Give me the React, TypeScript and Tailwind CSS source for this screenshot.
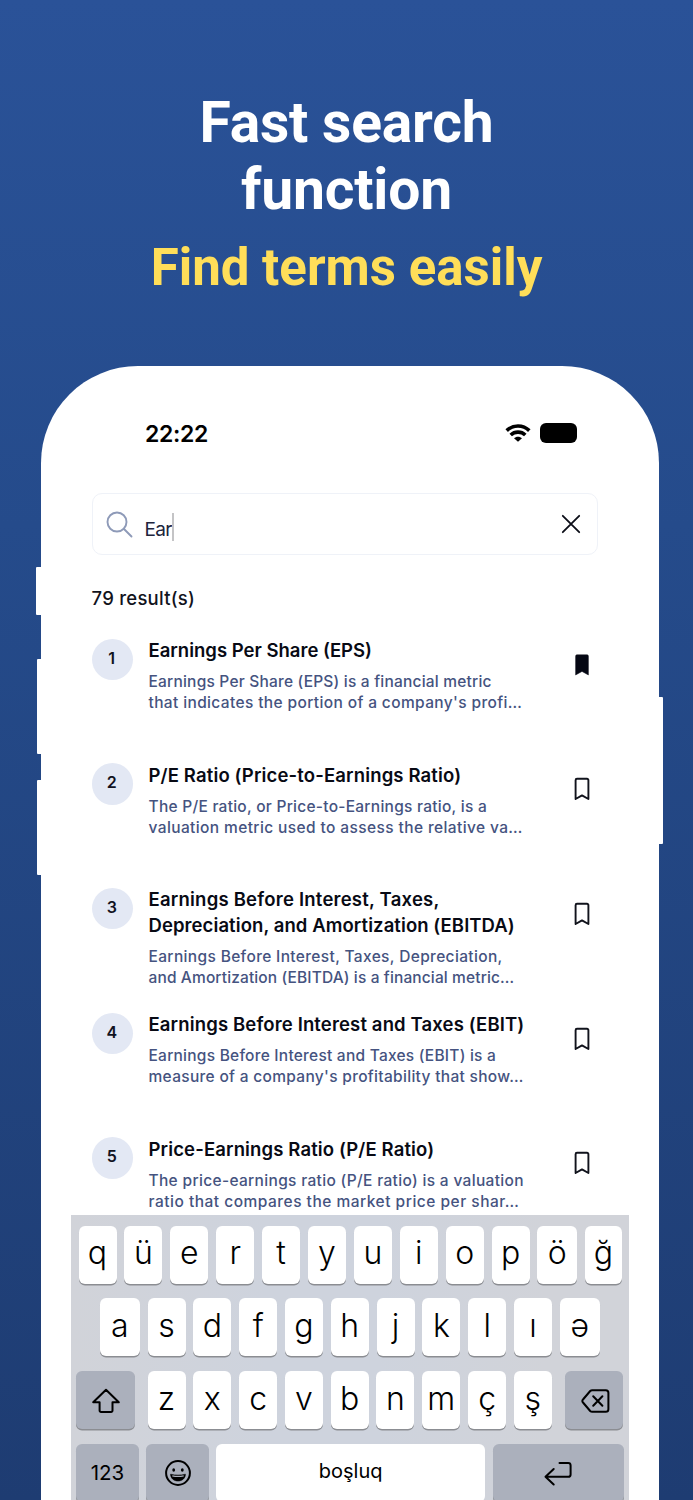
import type { ReactNode } from "react";

interface Line {
  text: string;
  className: string;
}

interface Term {
  title: Line[];
  lines: Line[];
  saved?: boolean;
}

const terms: Term[] = [
  {
    title: [{ text: "Earnings Per Share (EPS)", className: "tracking-[0px]" }],
    lines: [
      { text: "Earnings Per Share (EPS) is a financial metric", className: "tracking-[0.21px]" },
      { text: "that indicates the portion of a company's profi…", className: "tracking-[0.37px]" },
    ],
    saved: true,
  },
  {
    title: [{ text: "P/E Ratio (Price-to-Earnings Ratio)", className: "tracking-[0.14px]" }],
    lines: [
      { text: "The P/E ratio, or Price-to-Earnings ratio, is a", className: "tracking-[0.26px]" },
      { text: "valuation metric used to assess the relative va…", className: "tracking-[0.39px]" },
    ],
  },
  {
    title: [
      { text: "Earnings Before Interest, Taxes,", className: "tracking-[0.22px]" },
      { text: "Depreciation, and Amortization (EBITDA)", className: "tracking-[0.08px]" },
    ],
    lines: [
      { text: "Earnings Before Interest, Taxes, Depreciation,", className: "tracking-[0.35px]" },
      { text: "and Amortization (EBITDA) is a financial metric…", className: "tracking-[0.13px]" },
    ],
  },
  {
    title: [{ text: "Earnings Before Interest and Taxes (EBIT)", className: "tracking-[0.14px]" }],
    lines: [
      { text: "Earnings Before Interest and Taxes (EBIT) is a", className: "tracking-[0.24px]" },
      { text: "measure of a company's profitability that show…", className: "tracking-[0.31px]" },
    ],
  },
  {
    title: [{ text: "Price-Earnings Ratio (P/E Ratio)", className: "tracking-[0.13px]" }],
    lines: [
      { text: "The price-earnings ratio (P/E ratio) is a valuation", className: "tracking-[0.33px]" },
      { text: "ratio that compares the market price per shar…", className: "tracking-[0.5px]" },
    ],
  },
];

function Bookmark({ filled }: { filled?: boolean }) {
  return (
    <svg width="18" height="24" viewBox="0 0 18 24" className="mt-[14px]">
      <path
        d="M4 1.800h10a1.400 1.400 0 0 1 1.400 1.400v18.800L9 18.400l-6.400 3.600V3.200A1.400 1.400 0 0 1 4 1.800z"
        fill={filled ? "#050713" : "none"}
        stroke="#11131c"
        strokeWidth={filled ? 0.5 : 1.9}
        strokeLinejoin="round"
      />
    </svg>
  );
}

function TermRow({ term, index }: { term: Term; index: number }) {
  return (
    <div className="flex h-[124.7px] shrink-0 items-start">
      <div className="flex size-[41.5px] shrink-0 justify-center rounded-full bg-[#e3e8f4] pt-[9px] pr-[1px] text-[16px] leading-[21px] font-semibold text-[#11131f]">
        {index}
      </div>
      <div className="-mt-[1.5px] ml-[15.5px] w-[410px] shrink-0 whitespace-nowrap">
        <h2 className="text-[18.5px] leading-[26px] font-semibold text-[#080a14]">
          {term.title.map((l) => (
            <span key={l.text} className={`block ${l.className}`}>{l.text}</span>
          ))}
        </h2>
        <p className="mt-[8px] text-[15.5px] leading-[21px] font-medium text-[#455380]">
          {term.lines.map((l) => (
            <span key={l.text} className={`block ${l.className}`}>{l.text}</span>
          ))}
        </p>
      </div>
      <div className="ml-[14px]">
        <Bookmark filled={term.saved} />
      </div>
    </div>
  );
}

function Key({ children, className = "w-[38px]" }: { children: ReactNode; className?: string }) {
  return (
    <div
      className={`flex h-[58px] shrink-0 items-center justify-center rounded-[6px] bg-white pb-[3px] text-[32px] leading-none font-[350] text-black shadow-[0_1.5px_0_#8b8d92] ${className}`}
    >
      {children}
    </div>
  );
}

function DarkKey({ children, className }: { children: ReactNode; className: string }) {
  return (
    <div
      className={`flex h-[58px] shrink-0 items-center justify-center rounded-[6px] bg-[#abb0bc] text-black shadow-[0_1.5px_0_#8b8d92] ${className}`}
    >
      {children}
    </div>
  );
}

function Keyboard() {
  return (
    <div className="relative ml-[30px] flex h-[285px] w-[558px] flex-col gap-[14.8px] overflow-hidden bg-[linear-gradient(90deg,#d1d3d9_0%,#ced3dd_35%,#ced3dd_55%,#d1d3d9_85%)] pt-[10.5px]">
      <div className="flex gap-[7.9px] pl-[7.5px]">
        {["q", "ü", "e", "r", "t", "y", "u", "i", "o", "p"].map((k) => (
          <Key key={k}>{k}</Key>
        ))}
        <Key className="w-[39.5px]">ö</Key>
        <Key className="w-[37px]">ğ</Key>
      </div>
      <div className="flex gap-[7.8px] pl-[29px]">
        <Key className="w-[39.8px]">a</Key>
        {["s", "d", "f", "g", "h", "j", "k", "l", "ı"].map((k) => (
          <Key key={k}>{k}</Key>
        ))}
        <Key className="w-[39.8px]">ə</Key>
      </div>
      <div className="flex pl-[5px]">
        <DarkKey className="w-[58.5px]">
          <svg width="30" height="28" viewBox="0 0 30 28" className="mt-[2px] ml-px" fill="none" stroke="black" strokeWidth="2" strokeLinejoin="round">
            <path d="M15 2.8 27.8 15.3h-6.3v8.2a1.4 1.4 0 0 1-1.4 1.4H10a1.4 1.4 0 0 1-1.4-1.4v-8.2H2.2z" />
          </svg>
        </DarkKey>
        <div className="mx-[13px] flex gap-[7.8px]">
          {["z", "x", "c", "v", "b", "n", "m", "ç", "ş"].map((k) => (
            <Key key={k}>{k}</Key>
          ))}
        </div>
        <DarkKey className="w-[58.5px]">
          <svg width="30" height="26" viewBox="0 0 30 26" className="mt-[2px] ml-[3px]" fill="none" stroke="black" strokeWidth="2" strokeLinecap="round" strokeLinejoin="round">
            <path d="M11.2 2.2h13.6a2.6 2.6 0 0 1 2.6 2.6v16.4a2.6 2.6 0 0 1-2.6 2.6H11.2a3 3 0 0 1-2-.8L2 14.5a2 2 0 0 1 0-3l7.200-8.500a3 3 0 0 1 2-.8z" />
            <path d="m12.200 8.200 9.200 9.600M21.400 8.200l-9.200 9.600" />
          </svg>
        </DarkKey>
      </div>
      <div className="flex gap-[7.2px] pl-[5px]">
        <DarkKey className="w-[63px] text-[20.500px]">123</DarkKey>
        <DarkKey className="w-[62.5px]">
          <svg width="28" height="28" viewBox="0 0 28 28" className="ml-px" fill="none" stroke="black">
            <circle cx="14" cy="14" r="11.900" strokeWidth="2" />
            <ellipse cx="9.700" cy="11" rx="1.400" ry="1.800" fill="black" stroke="none" />
            <ellipse cx="18.300" cy="11" rx="1.400" ry="1.800" fill="black" stroke="none" />
            <path d="M6.600 15.200c4.600 1.200 10.200 1.200 14.800 0 0 4-3.200 6.800-7.400 6.800s-7.400-2.800-7.400-6.800z" fill="black" strokeWidth=".6" />
            <path d="M8.300 16.800c3.600.8 7.800.8 11.400 0" stroke="#abb0bc" strokeWidth="1.200" />
          </svg>
        </DarkKey>
        <div className="flex h-[58px] w-[269.500px] items-center justify-center rounded-[6px] bg-white pb-[3px] text-[20px] text-black">
          boşluq
        </div>
        <DarkKey className="w-[131px]">
          <svg width="28" height="26" viewBox="0 0 28 26" fill="none" stroke="black" strokeWidth="2" strokeLinecap="round" strokeLinejoin="round">
            <path d="M15.500 3h8.700a2.400 2.400 0 0 1 2.400 2.400v9a2.400 2.400 0 0 1-2.400 2.400H1.800M9.700 9l-8.200 7.800 8.200 7.700" />
          </svg>
        </DarkKey>
      </div>
    </div>
  );
}

export default function App() {
  return (
    <div className="flex h-[1500px] w-[693px] flex-col overflow-hidden bg-[linear-gradient(180deg,#2a5298_0%,#254b8b_35%,#1e3c72_100%)] font-[Inter,sans-serif]">
      <header className="flex h-[366px] shrink-0 flex-col items-center pt-[90px] font-[Roboto,sans-serif] font-bold">
        <h1 className="text-center text-[57px] leading-[66.500px] tracking-[-0.2px] text-white">
          Fast search
          <br />
          function
        </h1>
        <p className="mt-[15px] text-[51px] leading-[60px] text-[#ffde59]">Find terms easily</p>
      </header>

      <main className="relative ml-[41px] flex h-[1134px] w-[618px] shrink-0 flex-col rounded-t-[97px] bg-white">
        {/* Side buttons of the device */}
        <div className="absolute top-[201px] -left-[5px] h-[48px] w-[6px] rounded-l-[1px] bg-white" />
        <div className="absolute top-[293px] -left-[4px] h-[95px] w-[6px] rounded-l-[1px] bg-white" />
        <div className="absolute top-[414px] -left-[4px] h-[95px] w-[6px] rounded-l-[1px] bg-white" />
        <div className="absolute top-[331px] -right-[4px] h-[147px] w-[6px] rounded-r-[1px] bg-white" />

        {/* Status bar */}
        <div className="flex h-[127px] shrink-0 items-start pr-[82px] pl-[104px]">
          <span className="mt-[53px] text-[23px] leading-[30px] font-semibold tracking-[-0.3px] text-black">22:22</span>
          <svg width="26" height="20" viewBox="0 0 26 20" className="mt-[57px] ml-auto" fill="none" stroke="black" strokeWidth="3.600">
            <path d="M1.700 7.600c6.300-6.200 16.300-6.200 22.600 0" />
            <path d="M5.700 12c4.100-3.900 10.500-3.900 14.600 0" />
            <path d="M13 18.800 9 15.200c2-2.100 6-2.100 8 0z" fill="black" stroke="none" />
          </svg>
          <div className="mt-[57px] ml-[9px] h-[20px] w-[37.500px] rounded-[6px] bg-black" />
        </div>

        <div className="ml-[50.500px] flex h-[62px] w-[506px] shrink-0 items-center rounded-[10px] border border-[#eff2f8]">
          <svg width="28" height="28" viewBox="0 0 28 28" className="mt-px ml-[13px]" fill="none" stroke="#8e9ab8" strokeWidth="1.900" strokeLinecap="round">
            <circle cx="11" cy="11" r="9.500" />
            <path d="m18 18 7.500 7.500" />
          </svg>
          <span className="mt-[12px] ml-[11px] text-[19px] leading-[24px] tracking-[-0.7px] text-[#20243c]">Ear</span>
          <span className="mt-[5px] h-[28px] w-[2.500px] bg-[#c4c4c6]" />
          <svg width="20" height="20" viewBox="0 0 20 20" className="mr-[16px] ml-auto" stroke="#0b0d17" strokeWidth="1.800" strokeLinecap="round">
            <path d="m1.800 1.800 16.400 16.400M18.200 1.800 1.800 18.200" />
          </svg>
        </div>

        <div className="mt-[31px] ml-[50.500px] text-[18.500px] leading-[24px] font-medium tracking-[0.25px] text-[#11131c]">79 result(s)</div>

        <section className="mt-[28px] ml-[50.500px] flex h-[577px] shrink-0 flex-col overflow-hidden pt-[0.5px]">
          {terms.map((term, i) => (
            <TermRow key={i} term={term} index={i + 1} />
          ))}
        </section>

        <Keyboard />
      </main>
    </div>
  );
}
